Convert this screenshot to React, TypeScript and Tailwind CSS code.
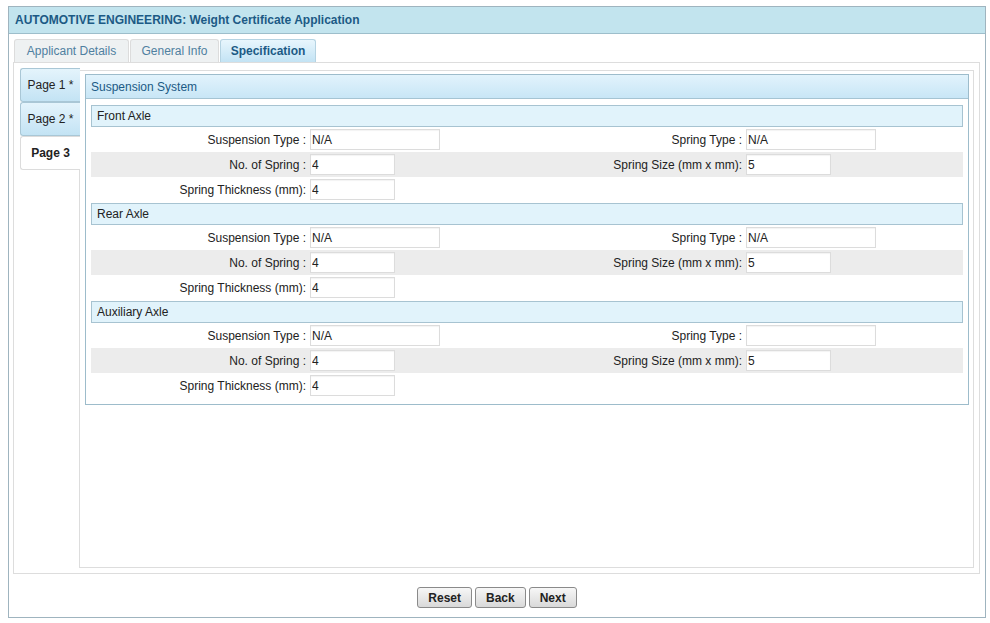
const font = { fontFamily: '"Liberation Sans", Arial, sans-serif' }

interface Field {
  label: string
  value: string
  wide?: boolean
}

interface Axle {
  title: string
  rows: [Field, Field | null][]
}

const axles: Axle[] = [
  {
    title: 'Front Axle',
    rows: [
      [
        { label: 'Suspension Type :', value: 'N/A', wide: true },
        { label: 'Spring Type :', value: 'N/A', wide: true },
      ],
      [
        { label: 'No. of Spring :', value: '4' },
        { label: 'Spring Size (mm x mm):', value: '5' },
      ],
      [{ label: 'Spring Thickness (mm):', value: '4' }, null],
    ],
  },
  {
    title: 'Rear Axle',
    rows: [
      [
        { label: 'Suspension Type :', value: 'N/A', wide: true },
        { label: 'Spring Type :', value: 'N/A', wide: true },
      ],
      [
        { label: 'No. of Spring :', value: '4' },
        { label: 'Spring Size (mm x mm):', value: '5' },
      ],
      [{ label: 'Spring Thickness (mm):', value: '4' }, null],
    ],
  },
  {
    title: 'Auxiliary Axle',
    rows: [
      [
        { label: 'Suspension Type :', value: 'N/A', wide: true },
        { label: 'Spring Type :', value: '', wide: true },
      ],
      [
        { label: 'No. of Spring :', value: '4' },
        { label: 'Spring Size (mm x mm):', value: '5' },
      ],
      [{ label: 'Spring Thickness (mm):', value: '4' }, null],
    ],
  },
]

function FieldCell({ field }: { field: Field | null }) {
  if (!field) return <div />
  return (
    <div className="flex items-center">
      <span className="w-[219px] text-right pr-[4px] text-[12px] text-[#222]">{field.label}</span>
      <input
        readOnly
        value={field.value}
        className={`${field.wide ? 'w-[130px]' : 'w-[85px]'} h-[21px] border border-[#dcdcdc] bg-white px-[1px] text-[12px] text-[#222] outline-none shadow-[inset_0_1px_1px_rgba(0,0,0,0.05)]`}
        style={font}
      />
    </div>
  )
}

function AxleSection({ axle }: { axle: Axle }) {
  return (
    <div className="mb-[1px]">
      <div className="h-[22px] border border-[#a7c3d1] bg-[#e1f3fb] px-[5px] flex items-center text-[12px] text-[#222]">
        {axle.title}
      </div>
      {axle.rows.map((row, i) => (
        <div key={i} className={`grid grid-cols-2 h-[25px] items-center ${i === 1 ? 'bg-[#ececec]' : ''}`}>
          <FieldCell field={row[0]} />
          <FieldCell field={row[1]} />
        </div>
      ))}
    </div>
  )
}

export default function App() {
  const pages = ['Page 1 *', 'Page 2 *', 'Page 3']
  return (
    <div className="w-[990px] h-[623px] bg-white pt-[6px] pl-[8px]" style={font}>
      <div className="w-[978px] h-[612px] border border-[#9fb4bf] flex flex-col">
        {/* Header */}
        <div className="h-[27px] shrink-0 bg-[#c2e4ee] border-b border-[#9dbecb] flex items-center px-[6px] text-[12px] font-bold text-[#1c5a85]">
          AUTOMOTIVE ENGINEERING: Weight Certificate Application
        </div>

        <div className="pl-[4px] pt-[5px]">
          {/* Tabs */}
          <div className="flex items-end h-[23px] pl-[1px] gap-[1px]">
            <div className="w-[115px] h-[23px] flex items-center justify-center border border-b-0 border-[#dcdcdc] bg-[#eef1f2] rounded-t-[3px] text-[12px] text-[#4f80a0]">
              Applicant Details
            </div>
            <div className="w-[89px] h-[23px] flex items-center justify-center border border-b-0 border-[#dcdcdc] bg-[#eef1f2] rounded-t-[3px] text-[12px] text-[#4f80a0]">
              General Info
            </div>
            <div className="w-[96px] h-[23px] flex items-center justify-center border border-b-0 border-[#b5d3e2] bg-gradient-to-b from-[#e8f6fd] to-[#c3e3f4] rounded-t-[3px] text-[12px] font-bold text-[#1c5a85]">
              Specification
            </div>
          </div>

          {/* Tab panel */}
          <div className="w-[967px] h-[512px] border border-[#dddddd] flex pl-[6px] pt-[5px]">
            <div className="w-[60px] shrink-0 flex flex-col relative z-10">
              {pages.map((p, i) =>
                i === 2 ? (
                  <div
                    key={p}
                    className="h-[34px] border border-r-0 border-[#dcdcdc] bg-white rounded-l-[3px] flex items-center justify-center text-[12px] font-bold text-[#222]"
                  >
                    {p}
                  </div>
                ) : (
                  <div
                    key={p}
                    className="h-[34px] border border-r-0 border-[#a9c7d6] bg-gradient-to-b from-[#e4f4fc] to-[#c3e3f4] rounded-l-[3px] flex items-center justify-center text-[12px] text-[#222]"
                  >
                    {p}
                  </div>
                ),
              )}
            </div>

            <div className="w-[895px] h-[498px] mt-[2px] -ml-[1px] border border-[#dddddd] pl-[5px] pt-[3px]">
              {/* Fieldset */}
              <div className="w-[884px] h-[331px] border border-[#9dbccb]">
                <div className="h-[24px] bg-gradient-to-b from-[#e2f3fc] to-[#c8e6f6] border-b border-[#a5c4d3] flex items-center px-[5px] text-[12px] text-[#1c5a85]">
                  Suspension System
                </div>
                <div className="pl-[5px] pr-[5px] pt-[6px]">
                  {axles.map((a) => (
                    <AxleSection key={a.title} axle={a} />
                  ))}
                </div>
              </div>
            </div>
          </div>
        </div>

        {/* Buttons */}
        <div className="flex justify-center gap-[3px] mt-[13px]">
          {['Reset', 'Back', 'Next'].map((b) => (
            <button
              key={b}
              className="h-[21px] px-[10px] border border-[#8a8a8a] rounded-[3px] bg-gradient-to-b from-[#f7f7f7] to-[#d9d9d9] text-[12px] font-bold text-[#222]"
              style={font}
            >
              {b}
            </button>
          ))}
        </div>
      </div>
    </div>
  )
}
